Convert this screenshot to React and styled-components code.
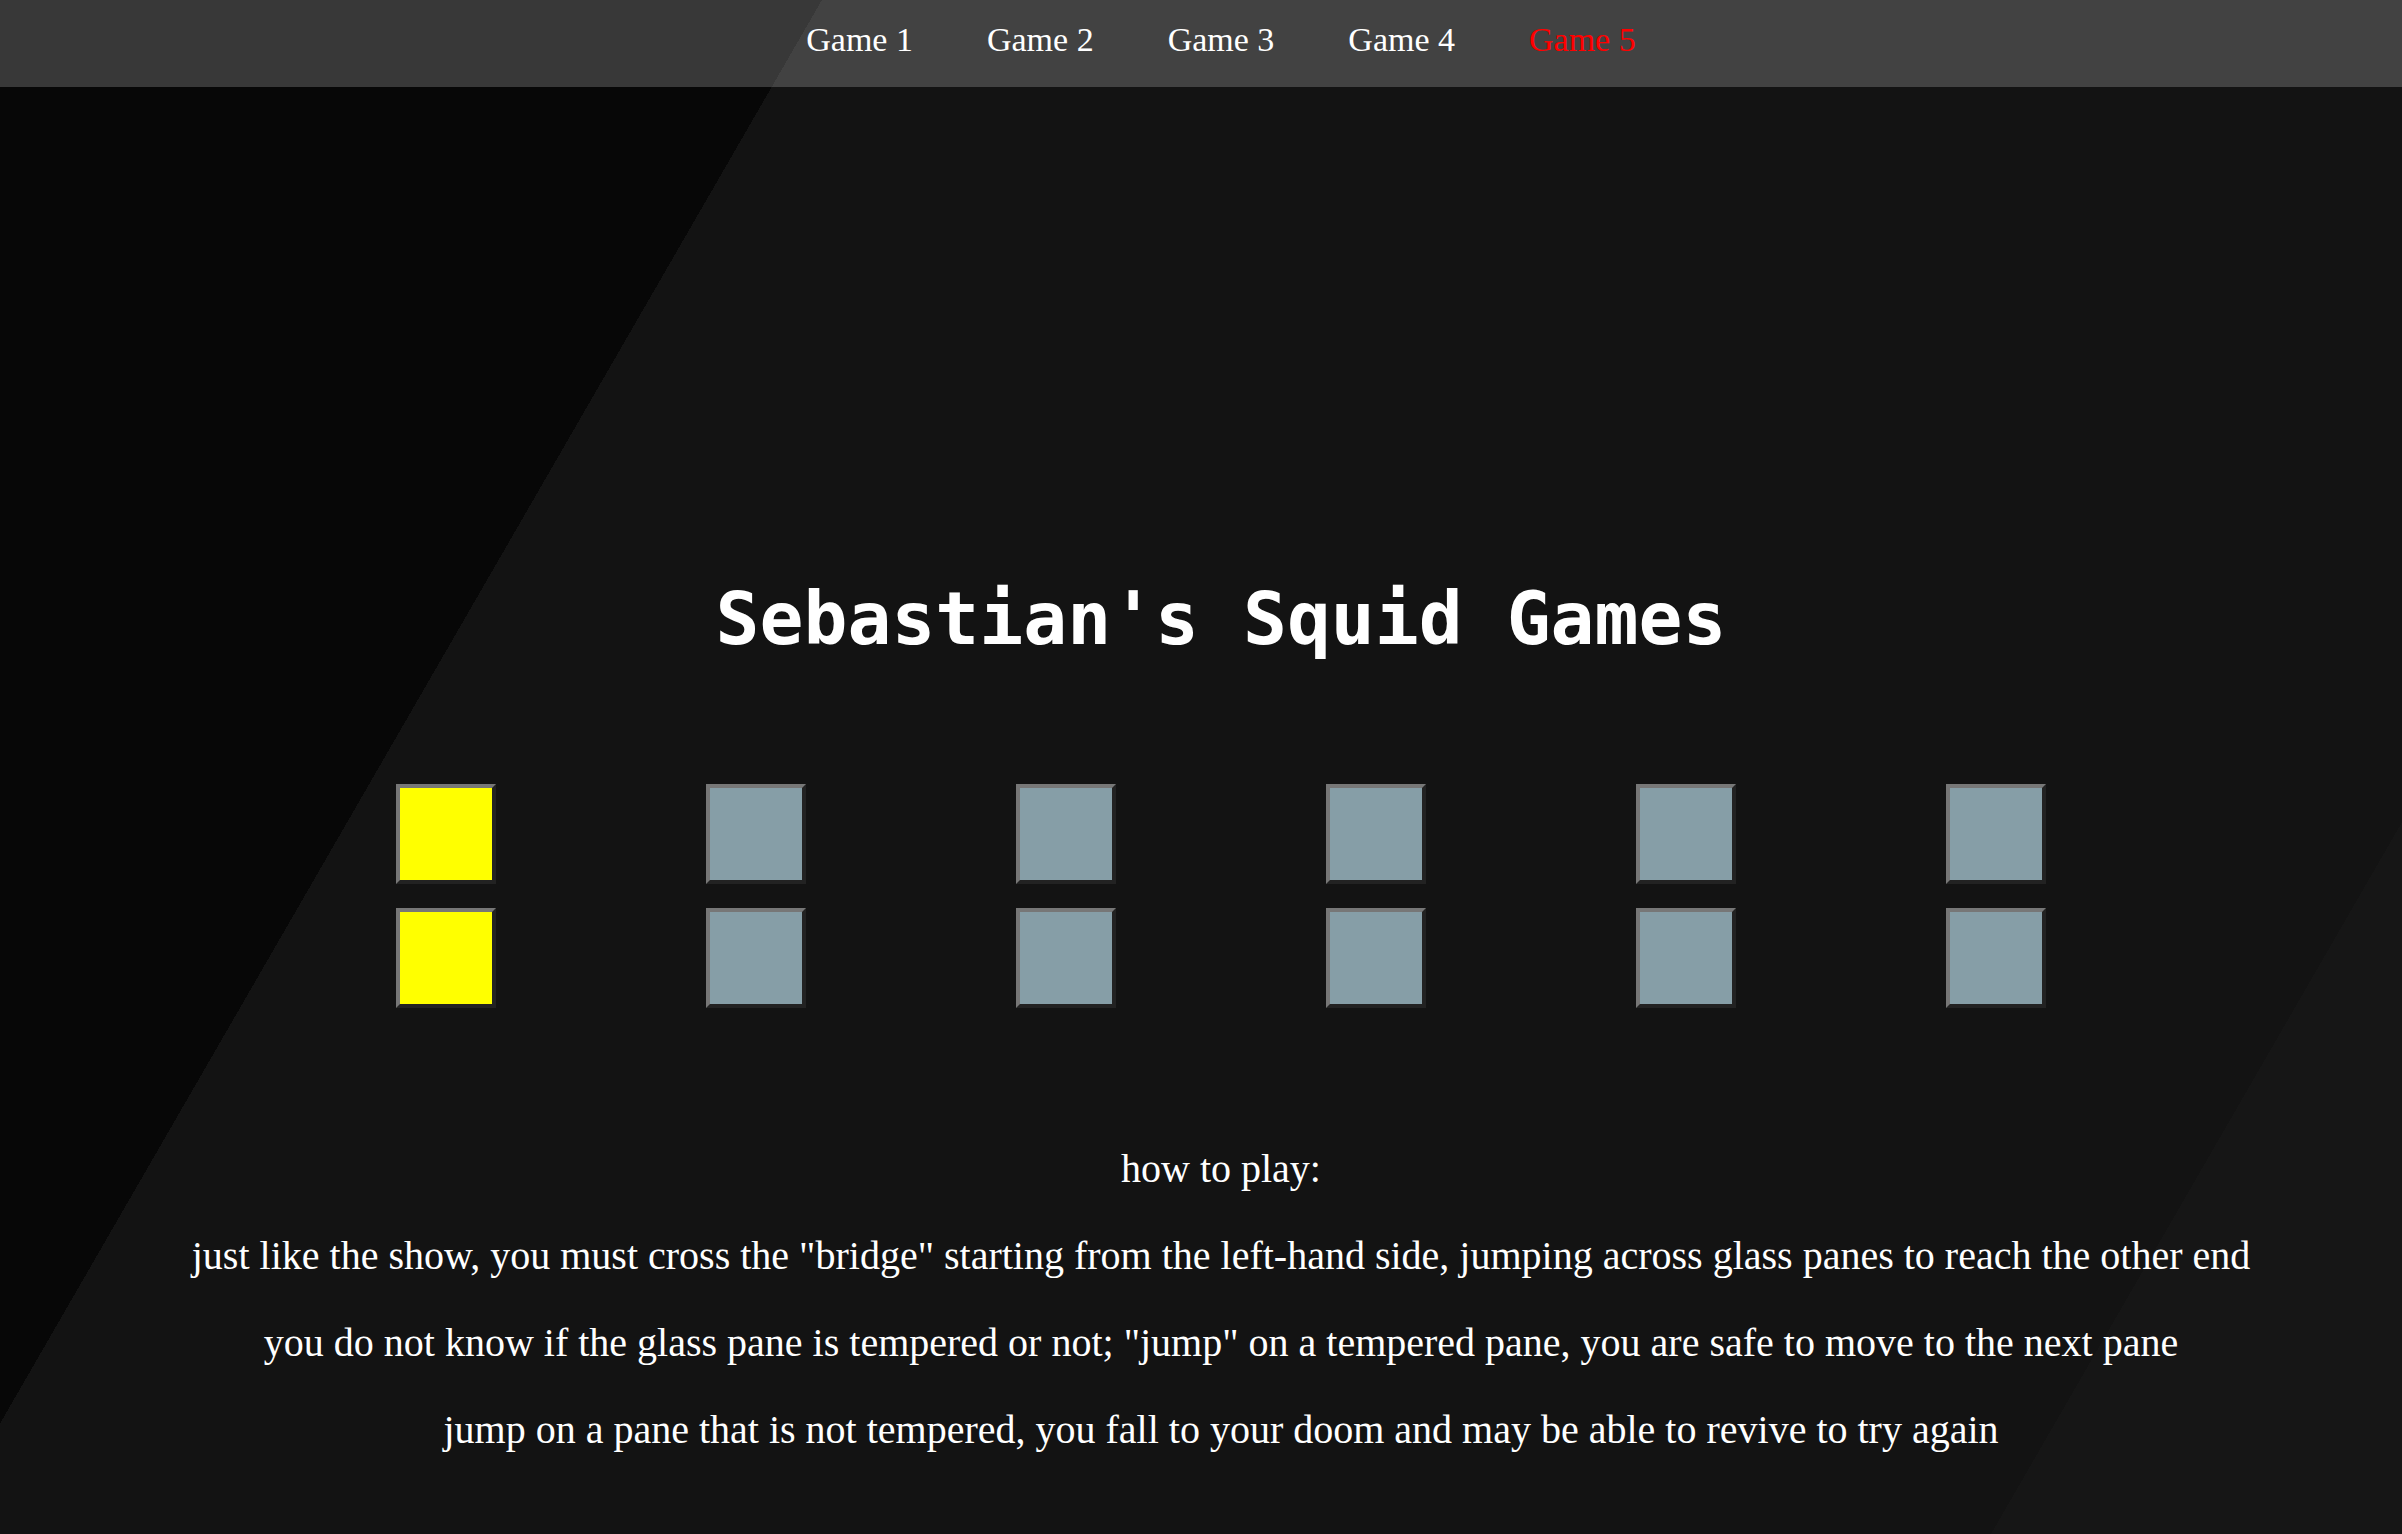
import React from "react";
import styled, { createGlobalStyle } from "styled-components";

const Global = createGlobalStyle`
  html, body { margin: 0; padding: 0; }
  body { font-family: "Liberation Serif", "Times New Roman", serif; color: #fff; background: #131313; }
`;

const Page = styled.div`
  min-height: 100vh;
  box-sizing: border-box;
  background: linear-gradient(120deg, #070707 25%, #131313 25%, #131313 87.5%, #161616 87.5%);
`;

const Nav = styled.nav`
  height: 87px;
  box-sizing: border-box;
  background: rgba(255, 255, 255, 0.2);
`;

const NavList = styled.ul`
  margin: 0;
  padding: 20px 0 0 40px;
  list-style: none;
  display: flex;
  justify-content: center;
  gap: 74px;
`;

const NavLink = styled.a`
  font-size: 34px;
  line-height: 39px;
  text-decoration: none;
  color: ${(p) => (p.$active ? "#ff0000" : "#ffffff")};
  cursor: pointer;
`;

const Main = styled.main`
  padding: 0 0 0 40px;
  display: flex;
  flex-direction: column;
  align-items: center;
`;

const Title = styled.h1`
  margin: 489px 0 0;
  font-family: "DejaVu Sans Mono", monospace;
  font-weight: bold;
  font-size: 73px;
  line-height: 85px;
  color: #fff;
`;

const Bridge = styled.div`
  margin-top: 123px;
  display: grid;
  grid-template-columns: repeat(6, 100px);
  grid-auto-rows: 100px;
  column-gap: 210px;
  row-gap: 24px;
`;

const Pane = styled.button`
  box-sizing: border-box;
  width: 100px;
  height: 100px;
  padding: 0;
  border: 4px solid;
  border-color: #777777 #222222 #222222 #777777;
  background: ${(p) => (p.$lit ? "#ffff00" : "#869ea7")};
  cursor: pointer;
`;

const Rules = styled.section`
  margin-top: 138px;
  text-align: center;
`;

const Rule = styled.p`
  margin: 0 0 41px;
  font-size: 40px;
  line-height: 46px;
  &:last-child { margin-bottom: 0; }
`;

const games = ["Game 1", "Game 2", "Game 3", "Game 4", "Game 5"];

export default function App() {
  const cols = 6;
  const panes = [];
  for (let r = 0; r < 2; r++) {
    for (let c = 0; c < cols; c++) {
      panes.push(<Pane key={`${r}-${c}`} $lit={c === 0} aria-label={`pane ${r}-${c}`} />);
    }
  }
  return (
    <>
      <Global />
      <Page>
        <Nav>
          <NavList>
            {games.map((g, i) => (
              <li key={g}>
                <NavLink $active={i === 4}>{g}</NavLink>
              </li>
            ))}
          </NavList>
        </Nav>
        <Main>
          <Title>Sebastian's Squid Games</Title>
          <Bridge>{panes}</Bridge>
          <Rules>
            <Rule>how to play:</Rule>
            <Rule>just like the show, you must cross the "bridge" starting from the left-hand side, jumping across glass panes to reach the other end</Rule>
            <Rule>you do not know if the glass pane is tempered or not; "jump" on a tempered pane, you are safe to move to the next pane</Rule>
            <Rule>jump on a pane that is not tempered, you fall to your doom and may be able to revive to try again</Rule>
          </Rules>
        </Main>
      </Page>
    </>
  );
}
